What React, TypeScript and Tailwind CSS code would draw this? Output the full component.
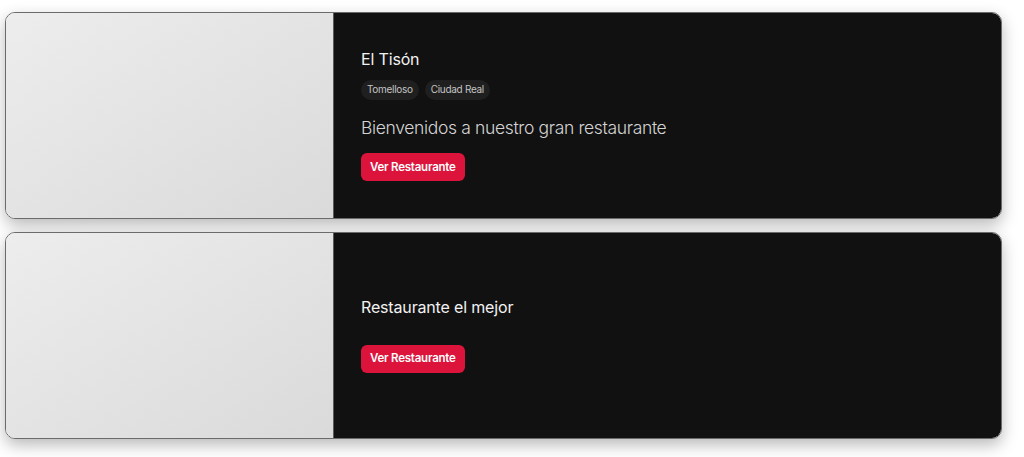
const restaurants = [
  {
    name: "El Tisón",
    tags: ["Tomelloso", "Ciudad Real"],
    description: "Bienvenidos a nuestro gran restaurante",
  },
  {
    name: "Restaurante el mejor",
    tags: [],
    description: "",
  },
];

function RestaurantCard({
  name,
  tags,
  description,
}: {
  name: string;
  tags: string[];
  description: string;
}) {
  return (
    <div className="flex h-[207px] w-[997px] overflow-hidden rounded-[10px] border border-[#6b6b6b] shadow-[0_6px_16px_rgba(0,0,0,0.28)]">
      <div className="w-[328px] shrink-0 border-r border-[#5a5a5a] bg-gradient-to-br from-[#ededed] to-[#dadada]" />
      <div className="flex flex-1 flex-col justify-center bg-[#111111] pb-[3px] pl-[27px]">
        <h2 className="text-[16px] leading-6 font-normal tracking-[-0.01em] text-[#f2f2f2]">{name}</h2>
        {tags.length > 0 && (
          <div className="mt-[9px] flex gap-[6px]">
            {tags.map((t) => (
              <span
                key={t}
                className="flex h-5 items-center rounded-full bg-[#1f1f1f] px-[6px] text-[10px] tracking-[-0.03em] text-[#c4c4c4]"
              >
                {t}
              </span>
            ))}
          </div>
        )}
        <p className="mt-[14px] text-[17.5px] leading-7 font-light tracking-[-0.02em] text-[#d4d4d4]">
          {description}
        </p>
        <div className="mt-[11px]">
          <button className="h-7 rounded-[6px] bg-[#dc143c] px-[9px] text-[11.5px] font-semibold tracking-[-0.02em] text-white">
            Ver Restaurante
          </button>
        </div>
      </div>
    </div>
  );
}

export default function App() {
  return (
    <div className="min-h-[457px] bg-white pt-3 pl-[5px] font-['Inter',sans-serif]">
      <div className="flex flex-col gap-[13px]">
        {restaurants.map((r) => (
          <RestaurantCard key={r.name} {...r} />
        ))}
      </div>
    </div>
  );
}
